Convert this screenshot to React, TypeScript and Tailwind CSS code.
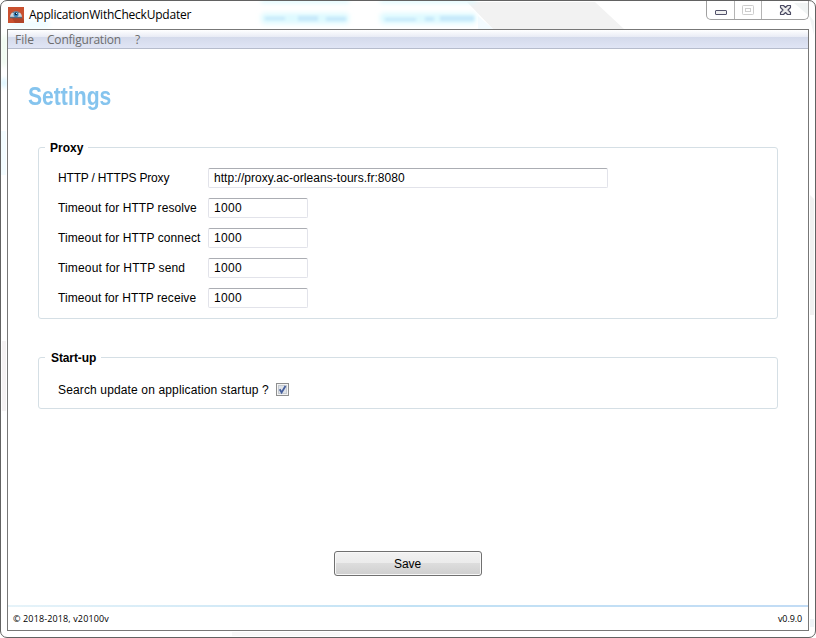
import React from "react";

const arial = "font-['Liberation_Sans',Arial,sans-serif]";
const segoe = "font-['Open_Sans','Noto_Sans',sans-serif]";

function GlassBackdrop() {
  return (
    <svg className="pointer-events-none absolute inset-0" width="814" height="636" aria-hidden="true">
      <defs>
        <filter id="haze" x="-20%" y="-100%" width="140%" height="300%">
          <feGaussianBlur stdDeviation="2.4" />
        </filter>
        <filter id="core" x="-20%" y="-100%" width="140%" height="300%">
          <feGaussianBlur stdDeviation="1.7" />
        </filter>
      </defs>
      <path d="M466 1H594L623 28H492Z" fill="#f2f2f2" />
      <path d="M477 15L492 28H477Z" fill="#f4fbff" />
      <g filter="url(#haze)" fill="#defaff">
        <rect x="260" y="12" width="88" height="11" rx="4" />
        <rect x="379" y="12" width="96" height="11" rx="4" />
        <rect x="260" y="-3" width="88" height="5" />
        <rect x="379" y="-3" width="96" height="5" />
        <rect x="8" y="20" width="40" height="7" fill="#eefcff" />
        <rect x="1" y="78" width="4" height="8" fill="#c4efff" />
        <rect x="1" y="35" width="4" height="30" fill="#e7f8e8" />
      </g>
      <g filter="url(#core)" fill="#c6e8fa">
        <rect x="264" y="16" width="20" height="3" />
        <rect x="297" y="15" width="20" height="5" />
        <rect x="325" y="16" width="20" height="4" />
        <rect x="384" y="17" width="31" height="3" />
        <rect x="424" y="16" width="9" height="4" />
        <rect x="439" y="15" width="34" height="5" />
      </g>
      <path d="M809 194L813 198V314H809Z" fill="#f1f1f1" />
      <rect x="0" y="130" width="5" height="44" fill="#f3fcff" />
      <rect x="1" y="340" width="4" height="70" fill="#f5f2f3" />
      <path d="M808 14L813 20V34Z" fill="#f0f4f4" />
      <rect x="231" y="631" width="108" height="4" fill="#f8f8f8" />
      <rect x="809" y="618" width="4" height="8" fill="#eff4f7" />
    </svg>
  );
}

function AppIcon() {
  return (
    <svg width="16" height="16" viewBox="0 0 16 16" className="shrink-0">
      <rect width="16" height="16" fill="#c9502f" />
      <path d="M4 11H14L16 13V16H7Z" fill="#b04429" />
      <path d="M2 10.5Q2 6.5 5 5Q8 3.4 11 5Q14 6.5 14 10.5Z" fill="#c8d3dc" />
      <path d="M2 9.8H14V11.2H2Z" fill="#56697a" />
      <path d="M4 5.5Q8 2.8 12 5.5L11 6Q8 4.4 5 6Z" fill="#5d6875" />
      <circle cx="8" cy="7.4" r="2.5" fill="#3484bd" />
      <circle cx="8" cy="6.8" r="1.4" fill="#122435" />
      <rect x="8" y="6" width="1" height="1" fill="#d9eefb" />
    </svg>
  );
}

function WindowButtons() {
  return (
    <div className="relative flex h-[19px] w-[103px] rounded-b-[5px] border border-t-0 border-[#a0a0a0]">
      <button aria-label="Minimize" className="h-full w-[28px] border-r border-[#b4b4b4]">
        <svg width="27" height="18" className="block">
          <rect x="8.5" y="9.5" width="11" height="4" rx="0.5" fill="#f0f0f0" stroke="#52526a" />
        </svg>
      </button>
      <button aria-label="Maximize" className="h-full w-[27px] border-r border-[#b4b4b4]">
        <svg width="26" height="18" className="block" fill="none" stroke="#cdcdcd">
          <rect x="7.5" y="4.5" width="11" height="9" rx="0.8" />
          <rect x="10.5" y="7.5" width="5" height="3" />
        </svg>
      </button>
      <button aria-label="Close" className="h-full flex-1">
        <svg width="46" height="18" className="block">
          <path d="M32 2H46V14Z" fill="#f1f4f4" />
          <path
            d="M18.5 4.5H21.5L23.5 6.5L25.5 4.5H28.5V6.5L26 9L28.5 11.5V13.5H25.5L23.5 11.5L21.5 13.5H18.5V11.5L21 9L18.5 6.5Z"
            fill="#ececec"
            stroke="#4c4c64"
            strokeWidth="1.15"
            strokeLinejoin="round"
          />
        </svg>
      </button>
    </div>
  );
}

function Field({ label, value, track, wide = false }: { label: string; value: string; track: string; wide?: boolean }) {
  return (
    <label className="flex h-5 items-center">
      <span className={`w-[150px] whitespace-nowrap ${track}`}>{label}</span>
      <span
        className={`flex h-5 items-center rounded-[2px] border border-[#e2e3ea] border-t-[#abadb3] bg-white pl-[5px] ${
          wide ? "w-[400px] tracking-[0.04px]" : "w-[100px] tracking-[0.33px]"
        }`}
      >
        {value}
      </span>
    </label>
  );
}

export default function App() {
  return (
    <div className={`relative flex h-[638px] w-[816px] flex-col rounded-[7px] border border-[#626262] bg-white text-[12px] leading-[14px] text-black ${arial}`}>
      <GlassBackdrop />
      <header className="relative flex h-[28px] shrink-0 items-start justify-between pr-[6px] pl-[7px]">
        <div className="flex items-center gap-[5px] pt-[6px]">
          <AppIcon />
          <span className={`whitespace-nowrap tracking-[-0.22px] ${segoe}`}>ApplicationWithCheckUpdater</span>
        </div>
        <WindowButtons />
      </header>

      <main className="relative mx-[6px] mb-[6px] flex flex-1 flex-col border border-[#777777] bg-white">
        <nav
          className={`flex h-[19px] shrink-0 items-center gap-[13px] border-b border-[#b6bccc] bg-[linear-gradient(#ffffff_0px,#e8ebf5_7px,#d4daeb_7px,#e0e5f5_18px)] pt-[2px] pl-[7px] text-[#6d6d6d] ${segoe}`}
        >
          <span>File</span>
          <span className="tracking-[-0.2px]">Configuration</span>
          <span className="pl-px">?</span>
        </nav>

        <div className="flex flex-1 flex-col">
          <h1 className="mt-[32px] ml-[20px] h-[30px] w-fit origin-left scale-x-[0.845] text-[25px] leading-[30px] font-bold text-[#85c4ee]">Settings</h1>

          <section className="mt-[36px] mr-[30px] ml-[30px] h-[172px] rounded-[3px] border border-[#d5dfe5]">
            <h2 className="-mt-[7px] ml-[6px] w-fit bg-white pr-[5px] pl-[5px] font-bold whitespace-nowrap">Proxy</h2>
            <div className="mt-[13px] ml-[19px] flex flex-col gap-[10px]">
              <Field label="HTTP / HTTPS Proxy" value="http://proxy.ac-orleans-tours.fr:8080" track="tracking-[-0.18px]" wide />
              <Field label="Timeout for HTTP resolve" value="1000" track="tracking-[0.09px]" />
              <Field label="Timeout for HTTP connect" value="1000" track="tracking-[0.1px]" />
              <Field label="Timeout for HTTP send" value="1000" track="tracking-[0.15px]" />
              <Field label="Timeout for HTTP receive" value="1000" track="tracking-[0.06px]" />
            </div>
          </section>

          <section className="mt-[38px] mr-[30px] ml-[30px] h-[52px] rounded-[3px] border border-[#d5dfe5]">
            <h2 className="-mt-[7px] ml-[6px] w-fit bg-white pr-[5px] pl-[6px] font-bold tracking-[-0.1px] whitespace-nowrap">Start-up</h2>
            <label className="mt-[18px] ml-[19px] flex h-[13px] items-center">
              <span className="w-[218px] whitespace-nowrap tracking-[0.14px]">Search update on application startup ?</span>
              <svg width="13" height="13" className="shrink-0">
                <rect x="0.5" y="0.5" width="12" height="12" fill="#f5f5f5" stroke="#8e8f8f" />
                <rect x="2.5" y="2.5" width="8" height="8" fill="#dfe3e8" stroke="#c5cad0" />
                <path d="M3.7 6.3L5.6 9.5L9.5 3" fill="none" stroke="#465f9d" strokeWidth="1.8" />
              </svg>
            </label>
          </section>

          <button className="mt-[142px] ml-[326px] flex h-[25px] w-[148px] items-center justify-center rounded-[3px] border border-[#707070] bg-[linear-gradient(#f2f2f2_0px,#ebebeb_11px,#dddddd_11px,#cfcfcf_23px)] pr-px shadow-[inset_0_0_0_1px_#f8f8f8]">
            <span className="tracking-[-0.1px]">Save</span>
          </button>
        </div>

        <footer className="shrink-0">
          <div className="h-[2px] bg-[linear-gradient(90deg,#e6f3f9,#c2e2f5_50%,#c2dcf5)]" />
          <div className={`flex h-[23px] items-center justify-between pr-[6px] pl-[5px] text-[9px] ${segoe}`}>
            <span className="tracking-[0.13px]">© 2018-2018, v20100v</span>
            <span className="tracking-[-0.1px]">v0.9.0</span>
          </div>
        </footer>
      </main>
    </div>
  );
}
